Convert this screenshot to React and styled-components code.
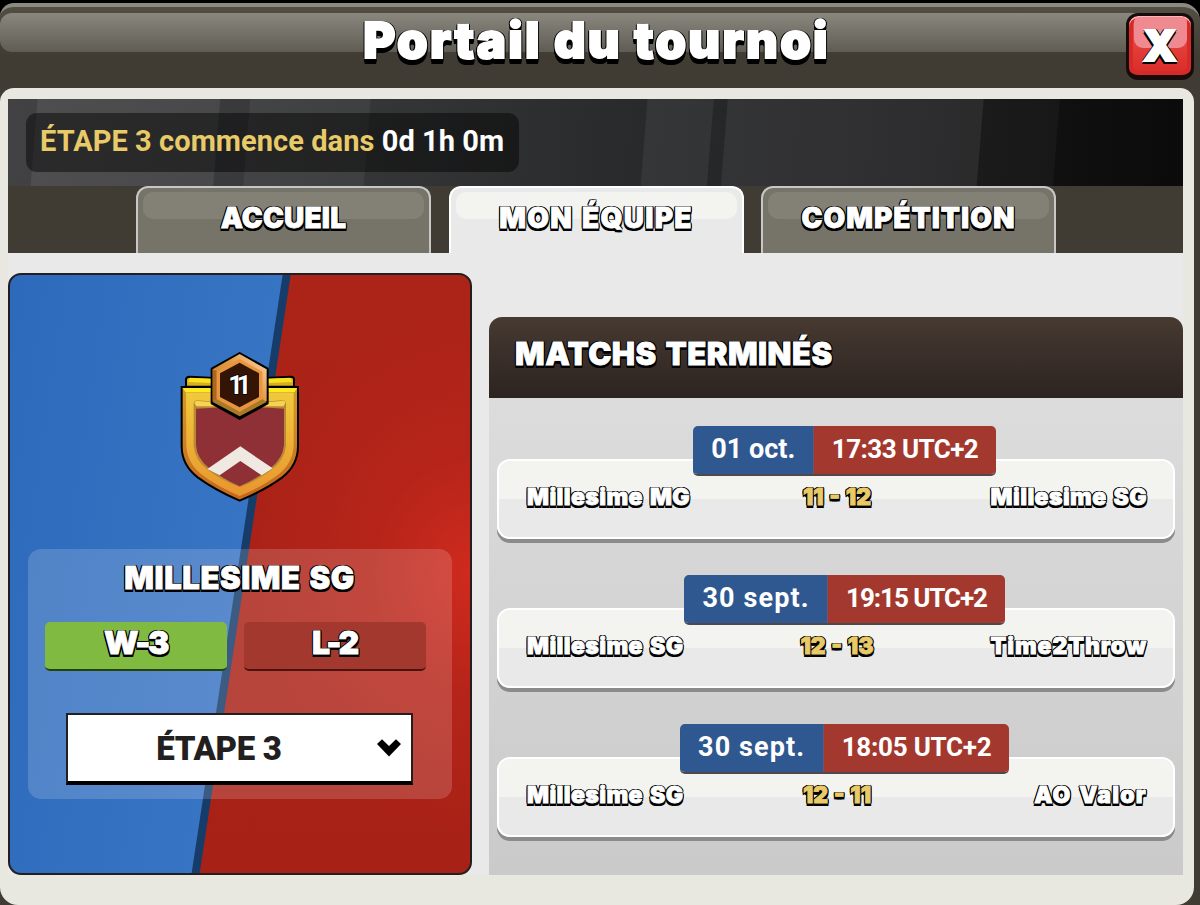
import React from 'react'
import styled, { createGlobalStyle, css } from 'styled-components'

const Colors = {
    GOLD: '#e8ca68',
    BLUE: '#2f5891',
    RED: '#a3392e',
    GREEN: '#80ba41',
    INK: '#231f20',
    FRAME: '#403c34',
    PANEL: '#e9e8e0',
}

const TABS = [
    { id: 'home', title: 'ACCUEIL', tracking: 0.2 },
    { id: 'team', title: 'MON ÉQUIPE', tracking: 1.3 },
    { id: 'competition', title: 'COMPÉTITION', tracking: 1 },
]

const MATCHES = [
    {
        date: { text: '01 oct.', tracking: 0 },
        time: { text: '17:33 UTC+2', tracking: -0.55 },
        home: { text: 'Millesime MG', tracking: 0.4 },
        away: { text: 'Millesime SG', tracking: 0.4 },
        score: '11 - 12',
    },
    {
        date: { text: '30 sept.', tracking: 1.1 },
        time: { text: '19:15 UTC+2', tracking: -1.05 },
        home: { text: 'Millesime SG', tracking: 0.4 },
        away: { text: 'Time2Throw', tracking: 0.9 },
        score: '12 - 13',
    },
    {
        date: { text: '30 sept.', tracking: 1.1 },
        time: { text: '18:05 UTC+2', tracking: -0.25 },
        home: { text: 'Millesime SG', tracking: 0.4 },
        away: { text: 'AO Valor', tracking: 1.2 },
        score: '12 - 11',
    },
]

export default function App() {
    return (
        <>
            <GlobalStyle />
            <Window>
                <TitleBar>
                    <Gloss />
                    <Title>Portail du tournoi</Title>
                    <CloseButton aria-label="Fermer"><CloseMark>X</CloseMark></CloseButton>
                </TitleBar>
                <Panel>
                    <Banner>
                        <Countdown>
                            <Gold>ÉTAPE 3 commence dans</Gold> 0d 1h 0m
                        </Countdown>
                    </Banner>
                    <TabBar>
                        {TABS.map(tab => (
                            <Tab key={tab.id} $active={tab.id === 'team'}>
                                <TabLabel $tracking={tab.tracking}>{tab.title}</TabLabel>
                            </Tab>
                        ))}
                    </TabBar>
                    <Content>
                        <TeamCard />
                        <Matches>
                            <MatchesHeader><MatchesTitle>MATCHS TERMINÉS</MatchesTitle></MatchesHeader>
                            <MatchList>
                                {MATCHES.map(match => <Match key={match.time.text} match={match} />)}
                            </MatchList>
                        </Matches>
                    </Content>
                </Panel>
            </Window>
        </>
    )
}

function TeamCard() {
    return (
        <Card>
            <Shield />
            <TeamInfo>
                <TeamName>MILLESIME SG</TeamName>
                <Record>
                    <RecordBox $color={Colors.GREEN} $edge="#24420f"><RecordText>W-3</RecordText></RecordBox>
                    <RecordBox $color={Colors.RED} $edge="#4b1210"><RecordText>L-2</RecordText></RecordBox>
                </Record>
                <Select>
                    <SelectText>ÉTAPE 3</SelectText>
                    <Chevron viewBox="0 0 24 18">
                        <path d="M0 5 L5 0.3 L12 7 L19 0.3 L24 5 L12 17.5 Z" fill="#000" />
                    </Chevron>
                </Select>
            </TeamInfo>
        </Card>
    )
}

function Match({ match }) {
    const { date, time, home, away, score } = match

    return (
        <MatchItem>
            <Schedule>
                <ScheduleCell $color={Colors.BLUE} $tracking={date.tracking} $size={27}>{date.text}</ScheduleCell>
                <ScheduleCell $color={Colors.RED} $tracking={time.tracking} $size={26}>{time.text}</ScheduleCell>
            </Schedule>
            <MatchRow>
                <PlayerName $tracking={home.tracking}>{home.text}</PlayerName>
                <Score>{score}</Score>
                <PlayerName $tracking={away.tracking} $right>{away.text}</PlayerName>
            </MatchRow>
        </MatchItem>
    )
}

function Shield() {
    return (
        <Badge viewBox="45 33 357 453">
            <defs>
                <linearGradient id="gold" x1="0" y1="0" x2="0" y2="1">
                    <stop offset="0" stopColor="#f0c93c" />
                    <stop offset="0.4" stopColor="#efb437" />
                    <stop offset="1" stopColor="#e8962e" />
                </linearGradient>
                <linearGradient id="side" x1="0" y1="0" x2="0" y2="1">
                    <stop offset="0" stopColor="#d29a2a" />
                    <stop offset="1" stopColor="#c4661f" />
                </linearGradient>
                <linearGradient id="hex" x1="0" y1="1" x2="1" y2="0">
                    <stop offset="0" stopColor="#b87425" />
                    <stop offset="0.6" stopColor="#e59a42" />
                    <stop offset="1" stopColor="#ffd9b0" />
                </linearGradient>
            </defs>
            <path d="M63 140 V117 Q65 110 74 110 L224 118 L377 110 Q386 110 387 117 V140 Z" fill="#d8ae22" stroke="#000" strokeWidth="6" />
            <path d="M69 126 L75 113 L224 120 L376 113 L382 126 L224 133 Z" fill="#f8e31e" />
            <path d="M50 141 H399 V318 Q399 375 352 412 Q300 450 224 482 Q150 450 98 412 Q50 375 50 318 Z" fill="url(#side)" stroke="#000" strokeWidth="6" />
            <path d="M63 158 H386 V316 Q384 368 342 402 Q296 438 224 468 Q154 438 108 402 Q66 368 64 316 Z" fill="url(#gold)" />
            <path d="M53 144 H396 L388 157 H62 Z" fill="#fdea22" />
            <path d="M86 190 Q88 180 98 181 Q224 196 350 181 Q361 180 363 190 V318 Q358 360 322 388 Q282 420 224 442 Q166 420 126 388 Q90 360 86 318 Z" fill="#b98a34" />
            <path d="M88 188 Q92 180 102 183 Q224 198 348 183 Q359 180 361 188 L356 199 H94 Z" fill="#f6d452" />
            <path d="M93 206 Q224 196 357 206 V316 Q353 356 318 383 Q279 414 224 439 Q170 414 131 383 Q96 356 93 316 Z" fill="#8f2f36" />
            <path d="M127 387 L226 319 L323 385 L290 406 L226 363 L164 406 Z" fill="#f0e9e2" />
            <path d="M224 39 L308 86 V190 L224 237 L140 190 V86 Z" fill="#000" stroke="#000" strokeWidth="6" strokeLinejoin="round" />
            <path d="M224 42 L305 88 V183 L224 227 L143 183 V88 Z" fill="url(#hex)" />
            <path d="M143 88 L155 93 V178 L143 186 Z" fill="#a9671f" />
            <path d="M143 186 L155 177 L224 215 L292 177 L305 186 L224 229 Z" fill="#a67a26" />
            <path d="M224 57 L292 95 V177 L224 215 L155 177 V95 Z" fill="#e9953f" />
            <path d="M224 68 L282 100 V171 L224 202 L165 171 V100 Z" fill="#341505" />
            <BadgeLevel x="215" y="162" textAnchor="middle">11</BadgeLevel>
        </Badge>
    )
}

const GlobalStyle = createGlobalStyle`
    * {
        box-sizing: border-box;
    }

    body {
        margin: 0;
        background: #000;
        font-family: Roboto, 'Liberation Sans', sans-serif;
    }
`

// chunky letters: a thin stroke in the text colour, then a black rim that is thicker below
const outlined = css`
    font-family: Inter, 'Liberation Sans', sans-serif;
    font-weight: 900;
    color: #fff;
    white-space: nowrap;
    -webkit-text-stroke: 0.8px currentColor;
    text-shadow:
        -1.2px -1.2px 0 #000, 1.2px -1.2px 0 #000,
        -1.5px 0 0 #000, 1.5px 0 0 #000,
        -1.2px 1.2px 0 #000, 1.2px 1.2px 0 #000,
        -1.2px 3px 0 #000, 1.2px 3px 0 #000;
`

const outlinedLarge = css`
    ${outlined}
    -webkit-text-stroke: 2px currentColor;
    text-shadow:
        -1.5px -1.5px 0 #000, 1.5px -1.5px 0 #000,
        -2px 0 0 #000, 2px 0 0 #000,
        -1.5px 2px 0 #000, 1.5px 2px 0 #000,
        -1.5px 4px 0 #000, 1.5px 4px 0 #000,
        -1px 6px 0 #000, 1px 6px 0 #000;
`

const Window = styled.div`
    width: 1200px;
    height: 905px;
    padding-top: 3px;
    overflow: hidden;
    background: #000;
`

const TitleBar = styled.header`
    position: relative;
    height: 85px;
    display: flex;
    justify-content: center;
    background: linear-gradient(#524e43, ${Colors.FRAME} 60%);
    border-top: 4px solid #8c8a80;
    border-radius: 14px 18px 0 0;
`

const Gloss = styled.div`
    position: absolute;
    top: 6px;
    left: 0;
    right: 8px;
    height: 39px;
    border-radius: 12px;
    background: linear-gradient(#8a877e, #5f5c54);
`

const Title = styled.h1`
    ${outlinedLarge}
    position: relative;
    margin: 3px 7px 0 0;
    font-size: 49px;
    letter-spacing: 2.3px;
    line-height: 62px;
`

const CloseButton = styled.button`
    position: absolute;
    top: 6px;
    right: 6px;
    width: 68px;
    height: 67px;
    padding: 0;
    border: 3px solid #150c0b;
    border-bottom-width: 5px;
    border-radius: 12px;
    background: linear-gradient(#ef5350, #d92b27);
    box-shadow: inset 0 2px 0 #ffb5b5, inset 0 0 0 4px #d62a28;

    &::before {
        content: '';
        display: block;
        width: 53px;
        height: 31px;
        margin: 0 auto -31px;
        border-radius: 5px 5px 9px 9px;
        background: #ef8b90;
    }
`

const CloseMark = styled.span`
    ${outlinedLarge}
    position: relative;
    display: block;
    margin-top: -4px;
    font-size: 43px;
    line-height: 57px;
    text-shadow:
        -1.5px -1.5px 0 #000, 1.5px -1.5px 0 #000,
        -2px 0 0 #000, 2px 0 0 #000,
        -1.5px 2px 0 #000, 1.5px 2px 0 #000,
        -2px 3px 0 #000, 1px 3px 0 #000;
`

const Panel = styled.main`
    width: 1194px;
    height: 817px;
    padding: 11px 11px 30px 8px;
    background: ${Colors.PANEL};
    border-radius: 14px 14px 18px 18px;
    box-shadow: 0 0 0 20px ${Colors.FRAME};
    clip-path: inset(0 -20px);
`

const Banner = styled.div`
    height: 87px;
    padding: 14px 18px;
    background:
        linear-gradient(94.6deg,
            rgba(255, 255, 255, 0) 29px, rgba(255, 255, 255, 0.07) 30px 211px,
            rgba(255, 255, 255, 0) 212px 241px, rgba(255, 255, 255, 0.05) 242px 361px,
            rgba(255, 255, 255, 0) 362px 637px, rgba(255, 255, 255, 0.06) 638px 703px,
            rgba(255, 255, 255, 0) 704px 717px, rgba(255, 255, 255, 0.06) 718px 972px,
            rgba(0, 0, 0, 0.1) 973px 1048px, rgba(0, 0, 0, 0.4) 1049px),
        linear-gradient(94.6deg, #424244, #333435 34%, #28292a 55%, #232325 72%, #1b1b1c 88%, #121212);
`

const Countdown = styled.div`
    width: 493px;
    height: 59px;
    padding-left: 14px;
    border-radius: 11px;
    background: rgba(0, 0, 0, 0.45);
    color: #fff;
    font-size: 29px;
    font-weight: 700;
    letter-spacing: 0.06px;
    line-height: 57px;
    white-space: nowrap;
`

const Gold = styled.span`
    color: ${Colors.GOLD};
`

const TabBar = styled.nav`
    height: 67px;
    padding-left: 1px;
    display: flex;
    justify-content: center;
    gap: 17.5px;
    background: ${Colors.FRAME};
`

const Tab = styled.div`
    width: 295px;
    padding: 4px 5px 0;
    border: 2px solid ${props => props.$active ? '#fff' : '#c9c7c6'};
    border-bottom: 0;
    border-radius: 12px 12px 0 0;
    background: ${props => props.$active ? '#e9e9e9' : '#767468'};

    &::before {
        content: '';
        display: block;
        height: 27px;
        margin-bottom: -27px;
        border-radius: 10px;
        background: ${props => props.$active ? '#f3f4f0' : '#838176'};
    }
`

const TabLabel = styled.div`
    ${outlined}
    position: relative;
    font-size: 28px;
    letter-spacing: ${props => props.$tracking}px;
    word-spacing: 2px;
    line-height: 53px;
    text-align: center;
`

const Content = styled.div`
    height: 622px;
    padding-top: 20px;
    display: flex;
    justify-content: space-between;
    background: #e9e9e9;
`

const Card = styled.section`
    width: 464px;
    height: 602px;
    padding: 76px 19px 0 18px;
    display: flex;
    flex-direction: column;
    align-items: center;
    border: 2px solid ${Colors.INK};
    border-radius: 13px;
    background:
        linear-gradient(98.65deg, #2e6abb 0, #3874c4 269px, #163c6a 270px 277px, transparent 278px),
        radial-gradient(220px 260px at 100% 50%, #cf2a1e, rgba(190, 38, 27, 0.6) 45%, rgba(170, 34, 23, 0)),
        linear-gradient(#ac2318, #a82116);
`

const Badge = styled.svg`
    width: 119px;
    height: 151px;
    flex: none;
    margin-right: 1px;
`

const BadgeLevel = styled.text`
    font-family: Roboto, 'Liberation Sans', sans-serif;
    font-size: 76px;
    font-weight: 700;
    letter-spacing: -18px;
    fill: #fff;
    stroke: #000;
    stroke-width: 5px;
    paint-order: stroke;
`

const TeamInfo = styled.div`
    width: 424px;
    height: 250px;
    margin-top: 47px;
    padding: 4px 18px 0 17px;
    display: flex;
    flex-direction: column;
    align-items: center;
    border-radius: 13px;
    background: rgba(255, 255, 255, 0.16);
`

const TeamName = styled.h2`
    ${outlined}
    margin: 0 0 0 1px;
    font-size: 31px;
    letter-spacing: 0.6px;
    word-spacing: 2px;
    line-height: 50px;
`

const Record = styled.div`
    width: 100%;
    margin-top: 19px;
    padding-right: 8px;
    display: flex;
    gap: 17px;
`

const RecordBox = styled.div`
    width: 182px;
    height: 49px;
    border-bottom: 2px solid ${props => props.$edge};
    border-radius: 5px;
    background: ${props => props.$color};
    text-align: center;
`

const RecordText = styled.span`
    ${outlined}
    font-size: 32px;
    letter-spacing: -2.4px;
    line-height: 42px;
`

const Select = styled.div`
    width: 347px;
    height: 72px;
    margin-top: 42px;
    padding: 0 10px 0 44px;
    display: flex;
    align-items: center;
    border: 2px solid ${Colors.INK};
    border-bottom: 4px solid #000;
    background: #fff;
`

const SelectText = styled.span`
    flex: 1;
    padding-right: 50px;
    text-align: center;
    color: ${Colors.INK};
    font-size: 33px;
    font-weight: 900;
    letter-spacing: -0.3px;
    white-space: nowrap;
`

const Chevron = styled.svg`
    width: 24px;
    height: 18px;
`

const Matches = styled.section`
    width: 694px;
    margin-top: 44px;
    display: flex;
    flex-direction: column;
`

const MatchesHeader = styled.div`
    height: 81px;
    padding-left: 26px;
    border-radius: 13px 13px 0 0;
    background: linear-gradient(#463a31, #2d2320);
`

const MatchesTitle = styled.h2`
    ${outlined}
    margin: 0;
    font-size: 31px;
    letter-spacing: 0.5px;
    word-spacing: 2px;
    line-height: 74px;
`

const MatchList = styled.div`
    flex: 1;
    padding: 28px 8px 0;
    display: flex;
    flex-direction: column;
    gap: 32px;
    background: linear-gradient(#dcdcdc, #cacaca);
`

const MatchItem = styled.div`
    height: 117px;
    display: flex;
    flex-direction: column;
    align-items: center;
`

const Schedule = styled.div`
    position: relative;
    z-index: 1;
    height: 50px;
    margin-left: 17px;
    display: flex;
    border-bottom: 2px solid #50484c;
    border-radius: 5px;
    overflow: hidden;
`

const ScheduleCell = styled.span`
    padding: 0 17.5px 0 18px;
    background: ${props => props.$color};
    color: #fff;
    font-size: ${props => props.$size}px;
    font-weight: 700;
    letter-spacing: ${props => props.$tracking}px;
    line-height: 46px;
    white-space: nowrap;

    & + & {
        border-left: 1px solid #6d5570;
    }
`

const MatchRow = styled.div`
    width: 678px;
    height: 80px;
    flex: none;
    margin-top: -17px;
    padding: 0 26px 5px 28px;
    display: grid;
    grid-template-columns: 1fr auto 1fr;
    align-items: center;
    border: 2px solid #fff;
    border-radius: 13px;
    background: linear-gradient(#f3f4f0 38px, #e9e9e9 38px);
    box-shadow: 0 4px 0 #8b8b8b;
`

const PlayerName = styled.span`
    ${outlined}
    font-size: 23px;
    letter-spacing: ${props => props.$tracking}px;
    word-spacing: 2px;
    text-align: ${props => props.$right ? 'right' : 'left'};
`

const Score = styled.span`
    ${outlined}
    color: ${Colors.GOLD};
    font-size: 23px;
    word-spacing: 1px;
`
